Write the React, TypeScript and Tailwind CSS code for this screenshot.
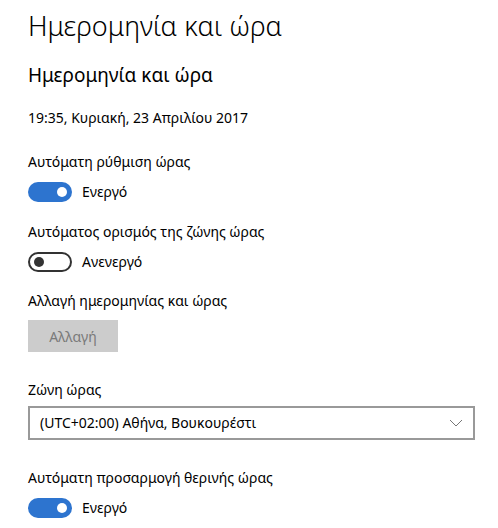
import React from "react";

function Toggle({ on }: { on: boolean }) {
  return on ? (
    <div className="flex h-5 w-11 items-center justify-end rounded-full bg-[#2d74cf] pr-[5px]">
      <div className="h-[10px] w-[10px] rounded-full bg-white" />
    </div>
  ) : (
    <div className="flex h-5 w-11 items-center rounded-full border-2 border-[#333] pl-[4px]">
      <div className="h-[10px] w-[10px] rounded-full bg-[#333]" />
    </div>
  );
}

function ToggleRow({ label, on }: { label: string; on: boolean }) {
  return (
    <div>
      <div className="text-[14px] leading-5">{label}</div>
      <div className="mt-[10px] flex items-center gap-[10px]">
        <Toggle on={on} />
        <span className="text-[14px] leading-5">{on ? "Ενεργό" : "Ανενεργό"}</span>
      </div>
    </div>
  );
}

export default function App() {
  return (
    <div
      className="min-h-screen w-[498px] bg-white pl-7 text-black"
      style={{ fontFamily: '"Noto Sans", sans-serif' }}
    >
      <h1 className="pt-[6px] text-[27px] font-light leading-10">Ημερομηνία και ώρα</h1>
      <h2 className="mt-[15px] text-[19px] leading-7">Ημερομηνία και ώρα</h2>
      <div className="mt-[19px] text-[14px] leading-5">19:35, Κυριακή, 23 Απριλίου 2017</div>

      <div className="mt-[24px] flex flex-col gap-[20px]">
        <ToggleRow label="Αυτόματη ρύθμιση ώρας" on />
        <ToggleRow label="Αυτόματος ορισμός της ζώνης ώρας" on={false} />
      </div>

      <div className="mt-[19px]">
        <div className="text-[14px] leading-5">Αλλαγή ημερομηνίας και ώρας</div>
        <button className="mt-[9px] h-8 w-[90px] bg-[#cccccc] text-[14px] text-[#7a7a7a]">
          Αλλαγή
        </button>
      </div>

      <div className="mt-[28px]">
        <div className="text-[14px] leading-5">Ζώνη ώρας</div>
        <div className="mt-[6px] flex h-[34px] w-[447px] items-center justify-between border-2 border-[#999999] pl-[10px] pr-[10px]">
          <span className="text-[14px] leading-5">(UTC+02:00) Αθήνα, Βουκουρέστι</span>
          <svg width="14" height="8" viewBox="0 0 14 8" fill="none">
            <path d="M1 1l6 6 6-6" stroke="#777" strokeWidth="1" />
          </svg>
        </div>
      </div>

      <div className="mt-[28px]">
        <ToggleRow label="Αυτόματη προσαρμογή θερινής ώρας" on />
      </div>
    </div>
  );
}
